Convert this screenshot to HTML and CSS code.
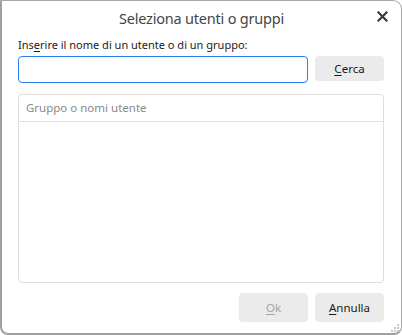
FILE: index.html
```html
<!DOCTYPE html>
<html lang="it">
<head>
<meta charset="utf-8">
<link rel="stylesheet" href="styles.css">
</head>
<body>
<div class="dialog">
  <div class="titlebar">
    <div class="title">Seleziona utenti o gruppi</div>
    <div class="close">
      <svg width="11" height="11" viewBox="0 0 11 11"><path d="M1.5 1.5 L9.5 9.5 M9.5 1.5 L1.5 9.5" stroke="#3a3a3a" stroke-width="2.2" stroke-linecap="square"/></svg>
    </div>
  </div>
  <div class="content">
    <div class="label">Ins<u>e</u>rire il nome di un utente o di un gruppo:</div>
    <div class="search-row">
      <div class="input"></div>
      <div class="btn"><u>C</u>erca</div>
    </div>
    <div class="list">
      <div class="list-head">Gruppo o nomi utente</div>
    </div>
    <div class="footer">
      <div class="btn disabled"><u>O</u>k</div>
      <div class="btn"><u>A</u>nnulla</div>
    </div>
  </div>
  <svg class="grip" width="8" height="8" viewBox="0 0 8 8">
    <rect x="6" y="0" width="2" height="2" fill="#c8c8c8"/>
    <rect x="3" y="3" width="2" height="2" fill="#c8c8c8"/>
    <rect x="6" y="3" width="2" height="2" fill="#c8c8c8"/>
    <rect x="0" y="6" width="2" height="2" fill="#c8c8c8"/>
    <rect x="3" y="6" width="2" height="2" fill="#c8c8c8"/>
    <rect x="6" y="6" width="2" height="2" fill="#c8c8c8"/>
  </svg>
</div>
</body>
</html>
```

FILE: styles.css
```css
html, body {
  margin: 0;
  padding: 0;
  background: #ffffff;
}
body {
  width: 402px;
  height: 335px;
  overflow: hidden;
  font-family: "Noto Sans", "Open Sans", sans-serif;
  color: #1e1e1e;
}
.dialog {
  position: relative;
  box-sizing: border-box;
  width: 402px;
  height: 335px;
  background: #ffffff;
  border: 1px solid #a8a8a8;
  border-left: 2px solid #a0a0a0;
  border-bottom: 2px solid #a0a0a0;
  border-radius: 0 9px 8px 8px;
  display: flex;
  flex-direction: column;
}
.titlebar {
  position: relative;
  height: 32px;
  display: flex;
  align-items: center;
  justify-content: center;
}
.title {
  font-size: 14.5px;
  color: #454545;
  padding-top: 2px;
  letter-spacing: -0.2px;
}
.close {
  position: absolute;
  right: 13px;
  top: 10px;
  width: 11px;
  height: 11px;
  display: flex;
}
.content {
  padding: 0 17px 0 16px;
  display: flex;
  flex-direction: column;
  flex: 1;
}
.label {
  font-size: 11px;
  line-height: 16px;
  margin-top: 4px;
  color: #1a1a1a;
}
.label u, .btn u { text-decoration-thickness: 1px; text-underline-offset: 2px; }
.search-row {
  display: flex;
  gap: 7px;
  margin-top: 3px;
  align-items: flex-start;
}
.input {
  box-sizing: border-box;
  width: 290px;
  height: 27px;
  border: 1px solid #2a7ef0;
  border-radius: 4px;
  background: #fff;
}
.btn {
  box-sizing: border-box;
  width: 69px;
  height: 25px;
  background: #ebebeb;
  border-radius: 4px;
  font-size: 11.5px;
  display: flex;
  align-items: center;
  justify-content: center;
  color: #1a1a1a;
}
.footer .btn { height: 29px; }
.btn.disabled { color: #a6a6a6; }
.list {
  box-sizing: border-box;
  margin-top: 11px;
  height: 189px;
  border: 1px solid #dedede;
  border-radius: 4px;
}
.list-head {
  box-sizing: border-box;
  height: 27px;
  border-bottom: 1px solid #e3e3e3;
  font-size: 11.5px;
  color: #8a8a8a;
  padding: 5px 0 0 7px;
}
.footer {
  display: flex;
  justify-content: flex-end;
  gap: 7px;
  margin-top: 10px;
}
.grip {
  position: absolute;
  right: 2px;
  bottom: 1px;
}
```
